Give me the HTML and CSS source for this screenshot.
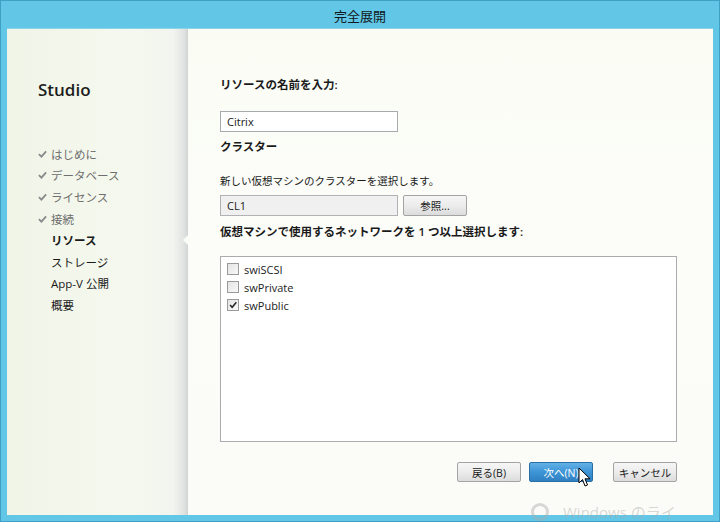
FILE: index.html
```html
<!DOCTYPE html>
<html lang="ja">
<head>
<meta charset="utf-8">
<link rel="stylesheet" href="styles.css">
</head>
<body>
<div class="frame">
  <div class="titlebar">完全展開</div>
  <div class="client">
    <aside class="sidebar">
      <div class="brand">Studio</div>
      <ul class="steps">
        <li class="done"><svg class="chk" viewBox="0 0 10 8"><path d="M1 4.2 L3.8 7 L9 1" fill="none" stroke="#8a8a8a" stroke-width="2"/></svg>はじめに</li>
        <li class="done"><svg class="chk" viewBox="0 0 10 8"><path d="M1 4.2 L3.8 7 L9 1" fill="none" stroke="#8a8a8a" stroke-width="2"/></svg>データベース</li>
        <li class="done"><svg class="chk" viewBox="0 0 10 8"><path d="M1 4.2 L3.8 7 L9 1" fill="none" stroke="#8a8a8a" stroke-width="2"/></svg>ライセンス</li>
        <li class="done"><svg class="chk" viewBox="0 0 10 8"><path d="M1 4.2 L3.8 7 L9 1" fill="none" stroke="#8a8a8a" stroke-width="2"/></svg>接続</li>
        <li class="current">リソース</li>
        <li>ストレージ</li>
        <li>App-V 公開</li>
        <li>概要</li>
      </ul>
      <span class="notch"></span>
    </aside>
    <main class="main">
      <div class="label strong first">リソースの名前を入力:</div>
      <div class="textbox name">Citrix</div>
      <div class="label strong cluster">クラスター</div>
      <div class="desc">新しい仮想マシンのクラスターを選択します。</div>
      <div class="row">
        <div class="textbox readonly">CL1</div>
        <button class="btn browse">参照...</button>
      </div>
      <div class="label strong net">仮想マシンで使用するネットワークを 1 つ以上選択します:</div>
      <div class="listbox">
        <div class="item"><span class="cb"></span>swiSCSI</div>
        <div class="item"><span class="cb"></span>swPrivate</div>
        <div class="item"><span class="cb checked"><svg viewBox="0 0 12 12"><path d="M2.5 6 L5 8.8 L10 2.8" fill="none" stroke="#222" stroke-width="1.8"/></svg></span>swPublic</div>
      </div>
      <div class="actions">
        <button class="btn">戻る(B)</button>
        <button class="btn primary">次へ(N)</button>
        <button class="btn cancel">キャンセル</button>
      </div>
    </main>
  </div>
  <svg class="cursor" viewBox="0 0 13 21"><path d="M1 1 L1 16 L4.5 12.5 L7 19 L9.5 18 L7 11.8 L12 11.8 Z" fill="#fff" stroke="#000" stroke-width="1" stroke-linejoin="round"/></svg>
  <div class="watermark"><span class="ring"></span>Windows のライ</div>
</div>
</body>
</html>
```

FILE: styles.css
```css
* { box-sizing: border-box; }
html, body { margin: 0; padding: 0; }
body {
  width: 720px;
  height: 522px;
  overflow: hidden;
  font-family: "Open Sans", "Noto Sans CJK JP", sans-serif;
  color: #1a1a1a;
}
.frame {
  position: relative;
  width: 720px;
  height: 522px;
  background: #62c6e6;
  border: 1px solid #3f9fc4;
  display: flex;
  flex-direction: column;
  padding: 0 6px 6px 6px;
}
.titlebar {
  height: 27px;
  flex: none;
  display: flex;
  align-items: center;
  justify-content: center;
  font-family: "Noto Sans CJK JP", sans-serif;
  font-size: 13px;
  color: #101820;
  padding-top: 1px;
}
.client {
  flex: 1;
  display: flex;
  background: #fbfcf7;
  border-top: 1px solid #8fd2ea;
  overflow: hidden;
}
.sidebar {
  position: relative;
  width: 181px;
  flex: none;
  background: linear-gradient(90deg, #f1f5e8 0%, #f5f8ee 70%, #f2f4ef 92%, #dfe2e0 98%, #cfd3d2 100%);
  padding: 49px 0 0 31px;
}
.brand {
  font-family: "Open Sans", sans-serif;
  font-size: 17px;
  line-height: 24px;
  font-weight: 600;
  color: #1c1c1c;
  margin-bottom: 41px;
}
.steps {
  list-style: none;
  margin: 0;
  padding: 0;
}
.steps li {
  height: 21.6px;
  display: flex;
  align-items: center;
  font-size: 11.5px;
  padding-left: 13px;
  color: #1a1a1a;
  font-family: "Open Sans", "Noto Sans CJK JP", sans-serif;
}
.steps li.done {
  color: #6e6e6e;
  padding-left: 0;
}
.steps li.current { font-weight: 700; }
.chk {
  width: 9px;
  height: 8px;
  margin-right: 4px;
  flex: none;
}
.notch {
  position: absolute;
  right: 0;
  top: 206px;
  width: 0;
  height: 0;
  border-top: 5px solid transparent;
  border-bottom: 5px solid transparent;
  border-right: 5px solid #fbfcf7;
}
.main {
  flex: 1;
  padding: 0 36px 0 32px;
  display: flex;
  flex-direction: column;
  background: linear-gradient(180deg, #fafcf4 0%, #fcfdf9 40%, #fbfcf7 100%);
}
.label {
  font-size: 11.5px;
  line-height: 16px;
  color: #1a1a1a;
}
.strong { font-weight: 600; }
.first { margin-top: 48px; }
.textbox {
  width: 178px;
  height: 21px;
  border: 1px solid #a6a9ae;
  background: #fff;
  font-size: 11px;
  line-height: 19px;
  padding-left: 6px;
}
.name { margin-top: 18px; }
.cluster { margin-top: 7px; }
.desc {
  font-size: 10.5px;
  line-height: 16px;
  margin-top: 18px;
}
.row {
  display: flex;
  gap: 5px;
  margin-top: 6px;
}
.readonly { background: #f0f0f0; border-color: #b0b2b5; }
.btn {
  height: 20px;
  width: 64px;
  font-family: "Open Sans", "Noto Sans CJK JP", sans-serif;
  font-size: 10.5px;
  color: #1a1a1a;
  border: 1px solid #a4a4a4;
  border-radius: 2px;
  background: linear-gradient(180deg, #f6f6f6 0%, #ececec 50%, #dcdcdc 100%);
  padding: 0;
}
.browse { height: 21px; }
.net { margin-top: 8px; }
.listbox {
  margin-top: 16px;
  height: 186px;
  border: 1px solid #a9abaf;
  background: #fff;
  padding-top: 3px;
  padding-left: 6px;
}
.item {
  height: 18px;
  display: flex;
  align-items: center;
  font-size: 11px;
  color: #222;
}
.cb {
  width: 12px;
  height: 12px;
  border: 1px solid #9a9a9a;
  background: linear-gradient(135deg, #e4e4e4, #f8f8f8);
  margin-right: 5px;
  display: flex;
}
.cb svg { width: 10px; height: 10px; }
.actions {
  display: flex;
  justify-content: flex-end;
  margin-top: 20px;
}
.actions .btn { height: 20px; margin-left: 8px; }
.actions .cancel { margin-left: 20px; }
.primary {
  color: #fff;
  border-color: #2a6ea6;
  background: linear-gradient(180deg, #62b1e6 0%, #3d95d6 50%, #2f80c2 100%);
}
.cursor {
  position: absolute;
  left: 577px;
  top: 466px;
  width: 13px;
  height: 21px;
}
.watermark {
  position: absolute;
  left: 530px;
  top: 502px;
  font-family: "Open Sans", "Noto Sans CJK JP", sans-serif;
  font-size: 15px;
  line-height: 18px;
  color: rgba(170, 170, 170, 0.45);
  white-space: nowrap;
  display: flex;
  align-items: center;
  gap: 14px;
}
.ring {
  width: 18px;
  height: 18px;
  border: 3px solid rgba(170,170,170,0.45);
  border-radius: 50%;
}
```
